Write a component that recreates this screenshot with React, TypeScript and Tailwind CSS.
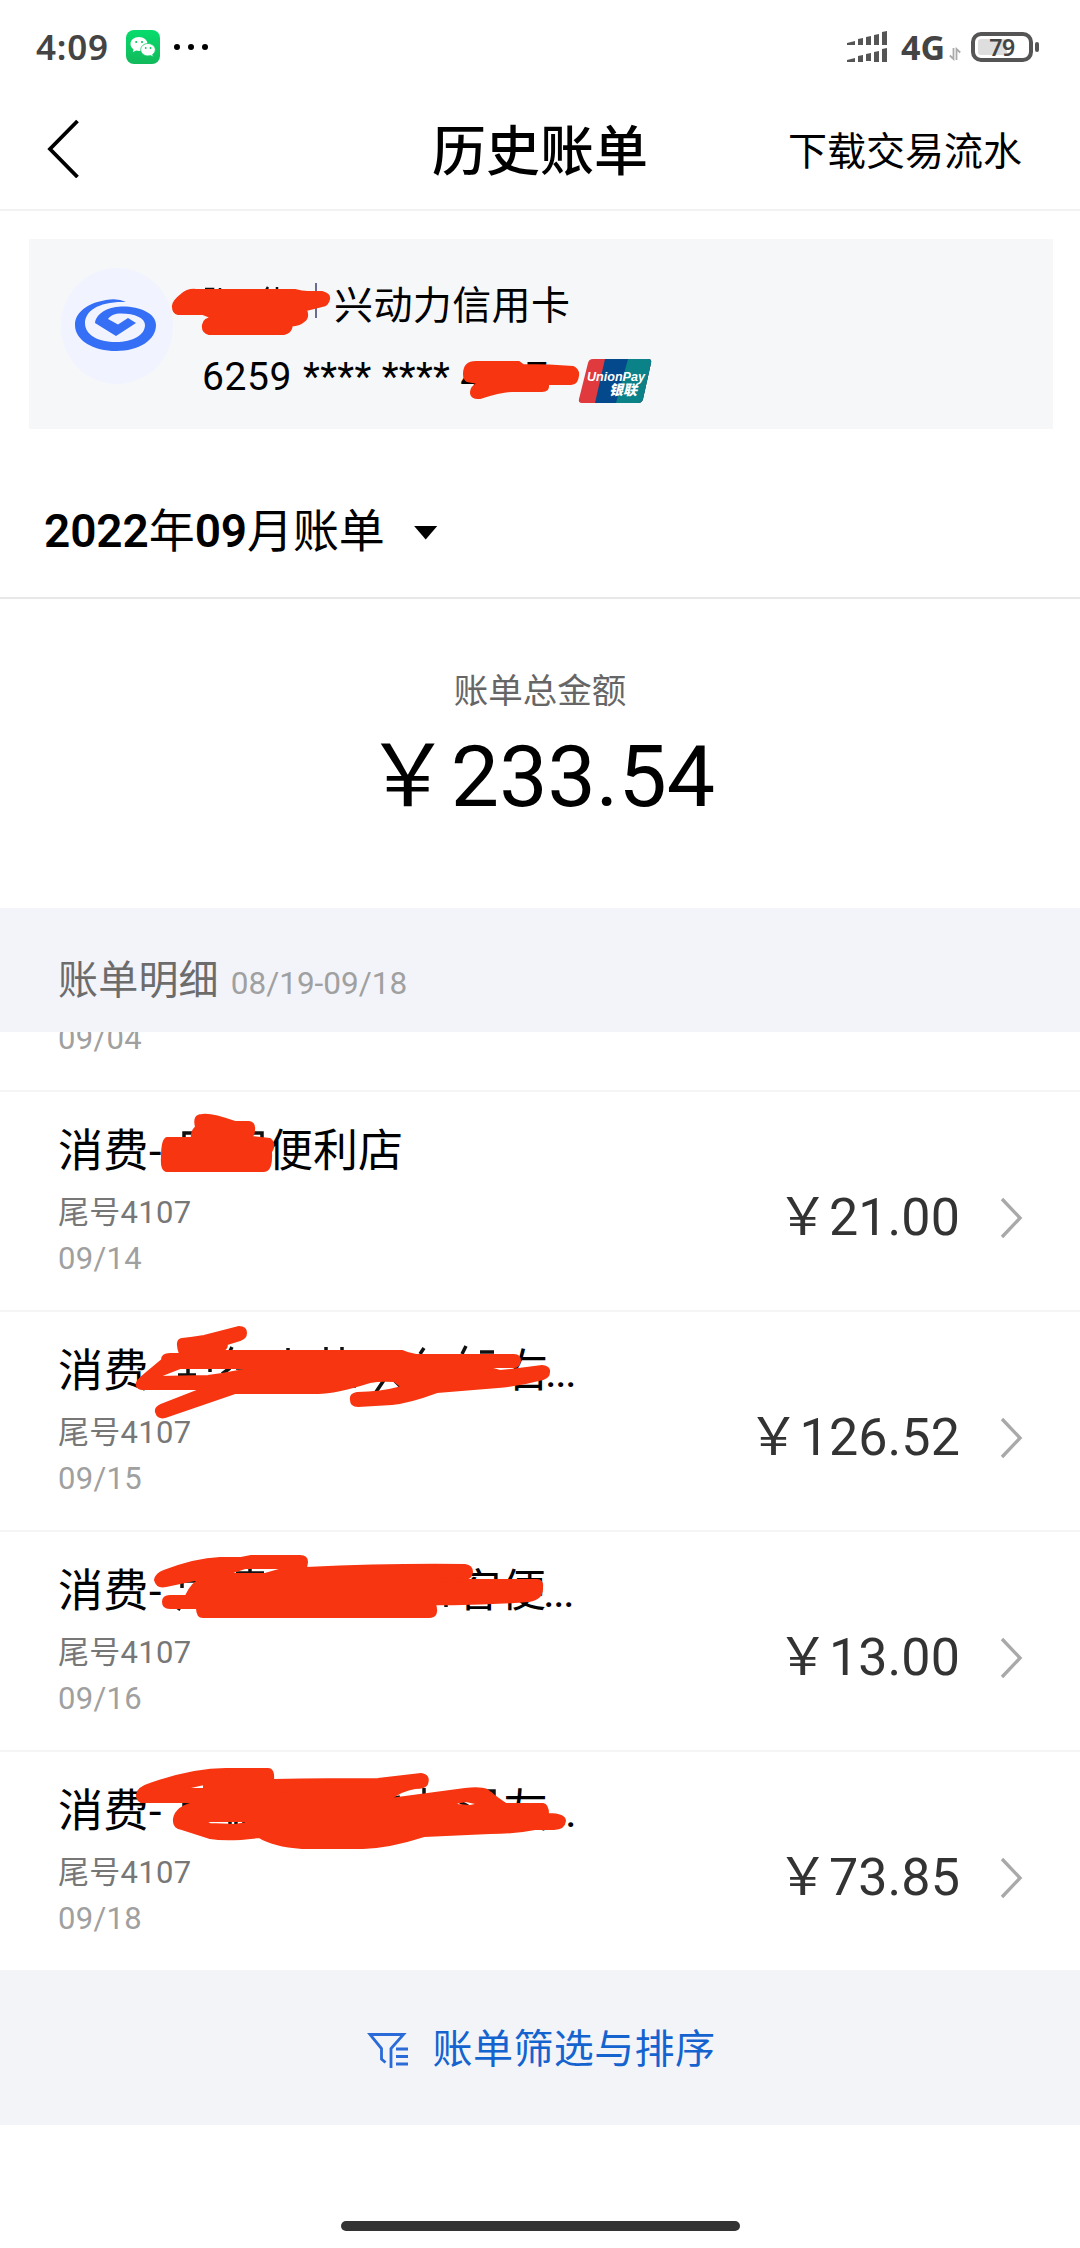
import React from "react";

const bills = [
  { tail: "便利店", dots: "", gap: "w-[106px]", date: "09/14", amount: "￥21.00" },
  { tail: "右", dots: "...", gap: "w-[341px]", date: "09/15", amount: "￥126.52" },
  { tail: "客便", dots: "...", gap: "w-[294px]", date: "09/16", amount: "￥13.00" },
  { tail: "友", dots: "...", gap: "w-[341px]", date: "09/18", amount: "￥73.85" },
];

function WeChat() {
  return (
    <svg className="ml-[16px] h-[34px] w-[34px]" viewBox="0 0 34 34">
      <defs>
        <linearGradient id="wc" x1="0" y1="0" x2="0" y2="1">
          <stop offset="0" stopColor="#07dc6c" />
          <stop offset="1" stopColor="#12b95c" />
        </linearGradient>
      </defs>
      <rect width="34" height="34" rx="8" fill="url(#wc)" />
      <path d="M13 7c-4.800 0-8.500 3.100-8.500 7 0 2.300 1.200 4.200 3.100 5.400l-.8 2.800 3.200-1.600c1 .3 2 .4 3 .4 4.700 0 8.500-3.100 8.500-7S17.700 7 13 7z" fill="#fff" />
      <path d="M22 13.500c-4 0-7.300 2.700-7.300 6.200s3.300 6.200 7.300 6.200c.9 0 1.700-.1 2.500-.4l2.800 1.500-.7-2.500c1.600-1.100 2.700-2.800 2.700-4.800 0-3.500-3.300-6.200-7.300-6.200z" fill="#fff" stroke="#0ccc65" strokeWidth="0.8" />
      <g fill="#10c563">
        <circle cx="10.200" cy="12" r="1.100" />
        <circle cx="16" cy="12" r="1.100" />
        <circle cx="19.700" cy="18" r="0.900" />
        <circle cx="24.500" cy="18" r="0.900" />
      </g>
    </svg>
  );
}

function StatusBar() {
  return (
    <div className="flex h-[94px] items-center pl-[36px] pr-[41px] text-[#444]">
      <span className="w-[74px] font-['Noto_Sans'] text-[35px] font-semibold leading-[40px] tracking-[0.8px]">4:09</span>
      <WeChat />
      <div className="ml-[14px] flex gap-2">
        <i className="h-1.5 w-1.5 rounded-full bg-black" />
        <i className="h-1.5 w-1.5 rounded-full bg-black" />
        <i className="h-1.5 w-1.5 rounded-full bg-black" />
      </div>
      <div className="ml-auto flex items-center">
        <svg className="h-[32px] w-[42px]" viewBox="0 0 42 32" fill="#555">
          <path d="M1 12l8-2v4H1zM12 8l5-1v7h-5zM20 6l5-1v9h-5zM28 4l5-1v11h-5zM36 1l5-1v14h-5z" />
          <path d="M1 29l8-2v4H1zM12 25l5-1v7h-5zM20 23l5-1v8h-5zM28 21l5-1v11h-5zM36 18l5-1v14h-5z" />
        </svg>
        <span className="ml-[13px] w-[46px] font-['Noto_Sans'] text-[34px] font-bold leading-[40px]">4G</span>
        <svg className="ml-[2px] mt-[14px] h-[14px] w-[12px]" viewBox="0 0 12 14" fill="none" stroke="#aaa" strokeWidth="1.800">
          <path d="M4.500 1v11L.8 8.500M7.500 13V2L11.200 5.500" />
        </svg>
        <div className="ml-[10px] flex h-[30px] w-[62px] items-center rounded-[10px] border-4 border-[#555] p-[3px]">
          <div className="flex h-full w-full items-center justify-center rounded-[3px] bg-linear-to-r from-[#dedede] from-60% to-white to-60% font-['Noto_Sans'] text-[23px] font-semibold leading-none tracking-[-0.5px]">
            79
          </div>
        </div>
        <i className="ml-[2px] h-[10px] w-[4px] rounded-[2px] bg-[#555]" />
      </div>
    </div>
  );
}

function BankLogo() {
  return (
    <svg className="mt-[27px] h-[118px] w-[112px]" viewBox="0 0 112 118">
      <ellipse cx="56" cy="60" rx="56" ry="58" fill="#f1f3ff" />
      <path
        d="M65 36Q57 32 45 34C27 37 14 46 14 59C14 75 33 85 55 85C78 85 95 74 95 59C95 47 78 40 60 40.500C46 41 35 48 34 57L55 70L75 57L67 52L57 58.500L47 53C50 49 54 47.500 60 47.500C74 47.500 84 52 84 59C84 69 72 76 55 76C37 76 24 69 24 57C24 45 38 35 65 36z"
        fill="#346ff6"
      />
    </svg>
  );
}

function UnionPay() {
  return (
    <svg className="ml-[3px] mt-[8px] h-[44px] w-[74px]" viewBox="0 0 74 44">
      <defs>
        <clipPath id="up">
          <path d="M15 0h55q4 0 3 4l-8 36q-1 4-5 4H4q-4 0-3-4L10 4q1-4 5-4z" />
        </clipPath>
      </defs>
      <g clipPath="url(#up)">
        <rect width="74" height="44" fill="#e03a3e" />
        <path d="M27 0h47v44H17z" fill="#04498b" />
        <path d="M50 0h24v44H38z" fill="#0a8287" />
      </g>
      <text x="9" y="22" fill="#fff" fontFamily="Liberation Sans" fontSize="13" fontWeight="700" fontStyle="italic" textLength="58" lengthAdjust="spacingAndGlyphs">UnionPay</text>
      <text x="31" y="36" fill="#fff" fontFamily="Noto Sans CJK SC" fontSize="14" fontWeight="900" fontStyle="italic">银联</text>
    </svg>
  );
}

function CardPanel() {
  return (
    <section className="ml-[29px] mt-[28px] flex h-[190px] w-[1024px] bg-[#f6f7f9] pl-[32px]">
      <BankLogo />
      <div className="ml-[29px] flex flex-col text-[39px] leading-[50px] text-black">
        <div className="mt-[42px] flex h-[50px] items-center">
          <i className="mb-[12px] ml-[113px] h-[35px] w-[2px] bg-[#6a6d91]" />
          <span className="ml-[17px] tracking-[0.4px]">兴动力信用卡</span>
        </div>
        <div className="mt-[20px] flex h-[52px] items-center">
          <span className="tracking-[0.6px]">6259</span>
          <span className="ml-[11px] whitespace-pre tracking-[0.35px]">**** ****</span>
          <span className="ml-[10px]">4107</span>
          <span className="w-[27px]" />
          <UnionPay />
        </div>
      </div>
    </section>
  );
}

type Bill = (typeof bills)[number];

function BillRow({ tail, dots, gap, date, amount }: Bill) {
  return (
    <li className="flex h-[220px] items-center border-t-2 border-[#f5f5f5] pl-[58px] pr-[56px]">
      <div className="flex h-full flex-col pt-[30px]">
        <div className="flex h-[60px] items-center whitespace-nowrap text-[45px] leading-[60px] text-black">
          <span className="tracking-[0.5px]">消费-</span>
          <span className={gap} />
          <span>{tail}</span>
          {dots && <span className="-ml-[3px] tracking-[-1.8px]">{dots}</span>}
        </div>
        <div className="mt-[8px] text-[31px] leading-[46px] tracking-[0.3px] text-[#777]">尾号4107</div>
        <div className="text-[31px] leading-[46px] tracking-[0.3px] text-[#a0a0a0]">{date}</div>
      </div>
      <div className="ml-auto mt-[34px] flex items-center">
        <span className="text-[52px] leading-[60px] tracking-[0.1px] text-[#333]">{amount}</span>
        <svg className="ml-[40px] h-[42px] w-[24px]" viewBox="0 0 24 42" fill="none" stroke="#a9a9a9" strokeWidth="3.400">
          <path d="M2 2l18 19L2 40" />
        </svg>
      </div>
    </li>
  );
}

function Marker() {
  return (
    <svg className="pointer-events-none absolute left-0 top-0 h-[2248px] w-[1080px]" viewBox="0 0 1080 2248">
      <g stroke="#111" strokeWidth="3.500" fill="none">
        <path d="M205 289h8v3M220 288v4M268 287l-3 5M277 287v5M211 318l3 3" strokeWidth="2.500" />
        <path d="M184 1140v-7h10M240 1136h10M250 1133h12v6" />
        <path d="M178 1375h18M188 1366v10M210 1366v6M222 1374l8-6M236 1368h26M288 1348v5M326 1347v5M342 1347v5M232 1347l-3 6M424 1348l-4 6M418 1369h26M458 1369h16M466 1346l-4 8M480 1352h14M376 1392l8-12M394 1380l8 8M350 1386h6" />
        <path d="M182 1588v-7h14M182 1604l-4 6M236 1573h28M250 1569v5M455 1578l4 3M446 1605v2" />
        <path d="M184 1810v-6h14M198 1817l8 6M230 1824v-4M236 1824v-4M244 1824v-4M290 1792v4M316 1794h34M392 1799l8-2M424 1788v8M460 1802l8 4M486 1791h8v5" />
      </g>
      <g fill="#f73510" stroke="#f73510" strokeWidth="2" strokeLinejoin="round" fillRule="evenodd">
        <path d="M173 307Q172 302 181 295Q188 289 196 290L295 290Q302 292 308 292H322Q330 294 329 299Q328 305 322 306L306 310Q309 317 304 321Q298 326 292 325Q291 333 284 334H209Q202 332 203 325Q204 318 213 318L203 314H178Q173 313 173 307z" />
        <path d="M464 374Q464 362 476 362H519L523 365Q550 365 573 367Q579 370 578 376Q577 384 571 384H548Q549 391 542 391H512Q502 391 480 398Q471 399 471 392Q471 387 478 383L467 381Q464 379 464 374z" />
        <path d="M162 1157Q162 1139 167 1138H192Q191 1132 196 1127Q193 1115 202 1115Q210 1113 235 1122H249Q255 1123 254 1130Q254 1135 251 1137L270 1139Q276 1144 271 1152Q272 1171 264 1171H167Q161 1171 162 1157z" />
        <path d="M137 1386Q135 1382 144 1375L162 1360Q162 1354 170 1354H180Q175 1340 182 1339Q192 1338 204 1336L239 1327Q246 1327 246 1333Q246 1338 240 1340L227 1344Q227 1349 222 1351H402Q408 1354 416 1355H514Q520 1355 520 1361Q519 1367 514 1367H486L500 1371Q520 1369 542 1366Q550 1367 549 1372Q549 1377 543 1379Q520 1385 498 1387L437 1392Q410 1402 392 1404L358 1406Q351 1406 351 1400Q350 1394 357 1393Q380 1393 402 1387L394 1381Q380 1380 370 1382Q335 1393 318 1393H235L165 1417Q158 1419 156 1412Q155 1408 161 1405L202 1389H143Q138 1389 137 1386zM157 1377L180 1368H244V1370L222 1374L208 1376zM402 1367H484V1369H402z" />
        <path d="M155 1580Q156 1574 164 1571Q195 1559 220 1558H241L251 1556H300Q307 1556 307 1562L306 1568Q390 1564 465 1565Q472 1566 472 1572Q471 1579 464 1579L435 1580H537Q543 1580 542 1587Q543 1599 529 1601Q480 1605 435 1604Q439 1617 429 1617H203Q197 1617 197 1608H170Q163 1608 163 1602Q163 1596 170 1596H186Q192 1582 204 1578L166 1586Q157 1588 155 1580zM233 1572L245 1568H286L265 1574H234zM436 1580L465 1579V1581z" />
        <path d="M137 1795Q137 1788 150 1784Q195 1768 230 1769H268Q274 1769 273 1780Q330 1779 378 1779L421 1774Q430 1775 427 1784Q425 1788 415 1788Q402 1790 390 1799Q405 1797 420 1795L465 1789Q480 1787 487 1790Q498 1799 506 1804H543Q548 1805 548 1814Q565 1814 565 1821Q564 1829 554 1829H535Q515 1833 490 1833L424 1836Q390 1847 363 1848H302Q273 1846 259 1837Q228 1841 210 1838L182 1829Q173 1828 174 1819Q176 1806 198 1802H141Q137 1800 137 1795zM182 1789L204 1784V1789zM196 1816L208 1821L259 1821L235 1825L210 1824zM278 1794L300 1792H353V1794zM455 1803L466 1801L480 1804L470 1806L458 1805z" />
      </g>
    </svg>
  );
}

export default function App() {
  return (
    <div className="relative flex h-[2248px] w-[1080px] flex-col overflow-hidden bg-white font-[Roboto,'Noto_Sans_CJK_SC',sans-serif]">
      <StatusBar />
      <header className="grid h-[117px] grid-cols-[1fr_auto_1fr] items-center border-b-2 border-[#f2f2f2] pl-[46px] pr-[58px]">
        <svg className="mb-[8px] h-[60px] w-[36px]" viewBox="0 0 36 60" fill="none" stroke="#000" strokeWidth="3.800">
          <path d="M31.500 3L4 31l27.500 28" />
        </svg>
        <h1 className="ml-[12px] mt-[3px] text-[54px] font-medium leading-[70px] text-black">历史账单</h1>
        <span className="justify-self-end text-[39px] leading-[50px] text-black">下载交易流水</span>
      </header>
      <CardPanel />
      <div className="flex h-[170px] items-center border-b-2 border-[#e8e8e8] pl-[44px] pt-[36px] text-[46px] leading-[60px] text-black">
        <span className="tracking-[-0.1px]">
          <b className="font-semibold">2022</b>年<b className="font-semibold">09</b>月账单
        </span>
        <i className="ml-[29px] mt-[3px] h-[14px] w-[24px] bg-black [clip-path:polygon(0_0,100%_0,50%_100%)]" />
      </div>
      <section className="flex h-[309px] flex-col items-center pt-[67px]">
        <span className="text-[34.500px] leading-[50px] text-[#666]">账单总金额</span>
        <span className="mt-[11px] text-[86px] leading-[100px] text-black">￥233.54</span>
      </section>
      <div className="flex h-[124px] items-baseline bg-[#f3f4f9] pl-[58px] pt-[45px] leading-[56px]">
        <span className="text-[40px] tracking-[0.2px] text-[#6c6c6c]">账单明细</span>
        <span className="ml-[12px] text-[31.500px] text-[#a0a0a0]">08/19-09/18</span>
      </div>
      <div className="flex h-[58px] flex-col justify-end overflow-hidden pb-[28px] pl-[58px]">
        <div className="text-[31px] leading-[46px] tracking-[0.3px] text-[#a0a0a0]">09/04</div>
      </div>
      <ul>
        {bills.map((b) => (
          <BillRow key={b.date} {...b} />
        ))}
      </ul>
      <button className="flex h-[155px] w-full items-center justify-center bg-[#f2f4f8] pl-[2px] pt-[4px] text-[#1463cf]">
        <svg className="mr-[24px] h-[38px] w-[42px]" viewBox="0 0 42 38" fill="none" stroke="#2a6bd8" strokeWidth="2.800">
          <path d="M18.500 31.500L14.500 28V17.500L3 3.500h33.500L24 17.500V37M29 18h12M29 25.500h12M29 33h12" />
        </svg>
        <span className="text-[40px] leading-[50px] tracking-[0.4px]">账单筛选与排序</span>
      </button>
      <div className="mt-[96px] h-[10px] w-[399px] self-center rounded-full bg-[#333]" />
      <Marker />
    </div>
  );
}
